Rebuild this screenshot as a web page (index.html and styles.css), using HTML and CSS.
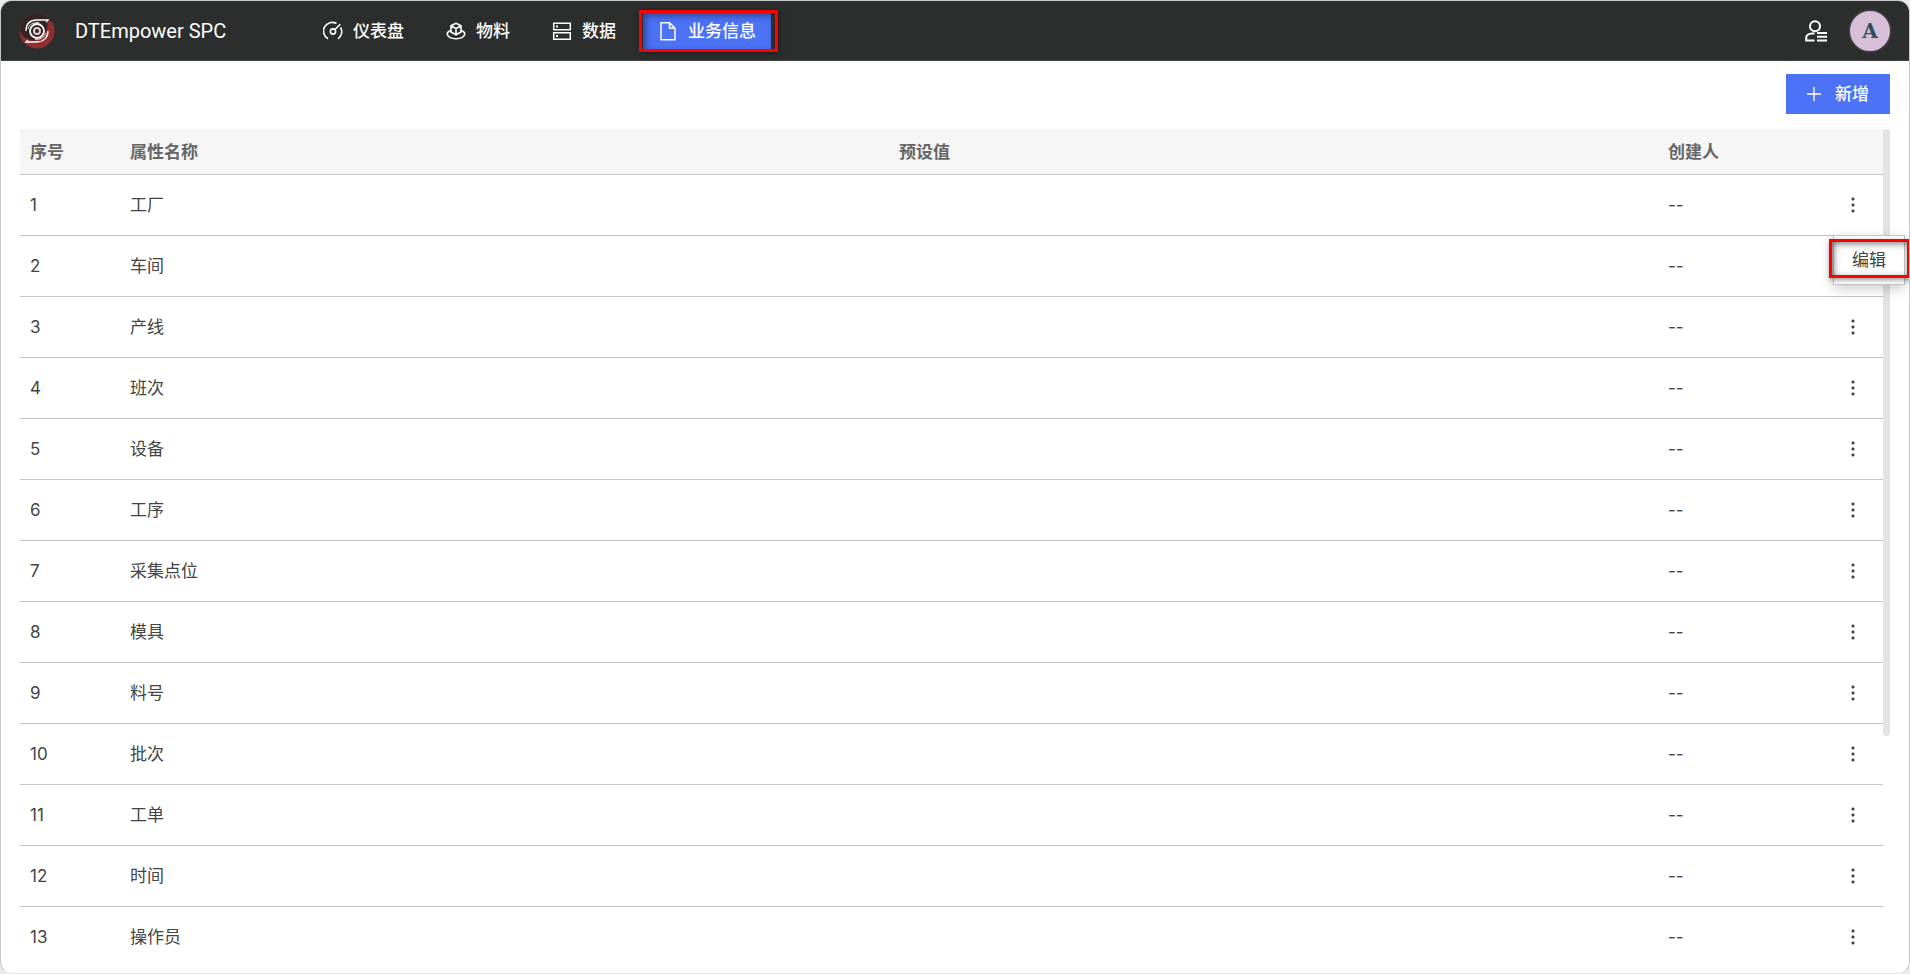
FILE: index.html
```html
<!DOCTYPE html>
<html lang="zh-CN">
<head>
    <meta charset="UTF-8">
    <meta name="viewport" content="width=device-width, initial-scale=1.0">
    <title>业务信息 - DTEmpower SPC</title>
    <link rel="stylesheet" href="styles.css">
</head>
<body>
    <div class="app">
        <header class="topbar">
            <svg class="logo" viewBox="0 0 36 36">
                <circle cx="18" cy="18" r="17.5" fill="#8f2f32"/>
                <path d="M0.500 17 A17.500 17.500 0 0 1 32 7.500 L28 9 C30 15 26 24 18 27 C10 29 3 24 0.500 17Z" fill="#332526"/>
                <g fill="none" stroke="#fff">
                    <circle cx="18" cy="18" r="7" stroke-width="1.8"/>
                    <circle cx="18" cy="18" r="3" stroke-width="2" stroke="#e6c8c8"/>
                    <path d="M7 18 C7 10 12 7 18 7 L29 7 L27 9" stroke-width="1.3"/>
                    <path d="M9 16 C10 11 14 9.500 20 9.500" stroke-width="0.8"/>
                    <path d="M29 18 C29 25 24 29 18 29 L7 29 L9 27" stroke-width="1.3"/>
                    <path d="M27 20 C26 24 22 26.500 16 26.500" stroke-width="0.8"/>
                </g>
            </svg>
            <h1 class="brand">DTEmpower SPC</h1>
            <nav class="nav">
                <a class="nav-item" href="#">
                    <svg class="nav-icon" viewBox="0 0 20 20" fill="none" stroke="currentColor" stroke-width="1.6">
                        <path d="M5 17.800 A8.600 8.600 0 0 1 13.500 2.500 M17.600 6.500 A8.600 8.600 0 0 1 15 17.800"/>
                        <circle cx="10" cy="10.500" r="2.600"/>
                        <path d="M12 8.500 L17.300 3.200"/>
                    </svg>
                    <span>仪表盘</span>
                </a>
                <a class="nav-item" href="#">
                    <svg class="nav-icon" viewBox="0 0 20 20" fill="none" stroke="currentColor" stroke-width="1.6" stroke-linejoin="round">
                        <path d="M10 2.200 L15 4.800 V11 L10 13.800 L5 11 V4.800 Z M5 4.800 L10 7.600 L15 4.800 M10 7.600 V13.800"/>
                        <path d="M5 9.500 C2.500 10.300 1.200 11.400 1.200 12.800 C1.200 15.800 5 17.800 10 17.800 C15 17.800 18.800 15.800 18.800 12.800 C18.800 11.400 17.500 10.300 15 9.500"/>
                    </svg>
                    <span>物料</span>
                </a>
                <a class="nav-item" href="#">
                    <svg class="nav-icon" viewBox="0 0 20 20" fill="none" stroke="currentColor" stroke-width="1.5">
                        <path d="M1.700 2.200 H18.300 V8.700 H1.700 Z M1.700 11.700 H18.300 V18.200 H1.700 Z"/>
                        <path d="M4 5.500 H6 M4 15 H6" stroke-width="2"/>
                    </svg>
                    <span>数据</span>
                </a>
                <a class="nav-item active" href="#">
                    <svg class="nav-icon" viewBox="0 0 20 20" fill="none" stroke="currentColor" stroke-width="1.5" stroke-linejoin="round">
                        <path d="M3 1.700 H11.500 L17 7.200 V18.700 H3 Z M11.500 1.700 V7.200 H17"/>
                    </svg>
                    <span>业务信息</span>
                </a>
            </nav>
            <button class="user-btn" type="button" aria-label="用户">
                <svg viewBox="0 0 24 24" fill="none" stroke="currentColor" stroke-width="2">
                    <circle cx="11" cy="7.200" r="5"/>
                    <path d="M10.500 14.500 H8 C4.500 14.500 2.200 16.500 2.200 19 V21.500 H10.500"/>
                    <path d="M13 14 H23 M13 17.800 H23 M13 21.500 H23"/>
                </svg>
            </button>
            <div class="avatar">A</div>
        </header>

        <main class="content">
            <div class="toolbar">
                <button class="add-btn" type="button">
                    <svg viewBox="0 0 14 14" stroke="currentColor" stroke-width="1.4"><path d="M7 0 V14 M0 7 H14"/></svg>
                    <span>新增</span>
                </button>
            </div>

            <div class="table-wrap">
                <table class="table">
                    <thead>
                        <tr>
                            <th class="col-no">序号</th>
                            <th>属性名称</th>
                            <th>预设值</th>
                            <th class="col-user">创建人</th>
                            <th class="col-action"></th>
                        </tr>
                    </thead>
                    <tbody>
                        <tr>
                            <td>1</td><td>工厂</td><td></td><td>--</td>
                            <td class="action">
                                <button class="more" type="button" aria-label="更多"></button>
                                <div class="menu">
                                    <button class="menu-item" type="button">编辑</button>
                                </div>
                            </td>
                        </tr>
                        <tr><td>2</td><td>车间</td><td></td><td>--</td><td class="action"><button class="more" type="button" aria-label="更多"></button></td></tr>
                        <tr><td>3</td><td>产线</td><td></td><td>--</td><td class="action"><button class="more" type="button" aria-label="更多"></button></td></tr>
                        <tr><td>4</td><td>班次</td><td></td><td>--</td><td class="action"><button class="more" type="button" aria-label="更多"></button></td></tr>
                        <tr><td>5</td><td>设备</td><td></td><td>--</td><td class="action"><button class="more" type="button" aria-label="更多"></button></td></tr>
                        <tr><td>6</td><td>工序</td><td></td><td>--</td><td class="action"><button class="more" type="button" aria-label="更多"></button></td></tr>
                        <tr><td>7</td><td>采集点位</td><td></td><td>--</td><td class="action"><button class="more" type="button" aria-label="更多"></button></td></tr>
                        <tr><td>8</td><td>模具</td><td></td><td>--</td><td class="action"><button class="more" type="button" aria-label="更多"></button></td></tr>
                        <tr><td>9</td><td>料号</td><td></td><td>--</td><td class="action"><button class="more" type="button" aria-label="更多"></button></td></tr>
                        <tr><td>10</td><td>批次</td><td></td><td>--</td><td class="action"><button class="more" type="button" aria-label="更多"></button></td></tr>
                        <tr><td>11</td><td>工单</td><td></td><td>--</td><td class="action"><button class="more" type="button" aria-label="更多"></button></td></tr>
                        <tr><td>12</td><td>时间</td><td></td><td>--</td><td class="action"><button class="more" type="button" aria-label="更多"></button></td></tr>
                        <tr><td>13</td><td>操作员</td><td></td><td>--</td><td class="action"><button class="more" type="button" aria-label="更多"></button></td></tr>
                    </tbody>
                </table>
                <div class="scrollbar"><div class="scroll-thumb"></div></div>
            </div>
        </main>
    </div>
</body>
</html>
```

FILE: styles.css
```css
* {
    box-sizing: border-box;
}

body {
    margin: 0;
    background-color: #ececec;
    font-family: Inter, "Noto Sans CJK SC", sans-serif;
    font-size: 17px;
    line-height: 24px;
    color: #444;
    overflow: hidden;
}

button {
    padding: 0;
    border: none;
    background: none;
    font: inherit;
    color: inherit;
    cursor: pointer;
}

.app {
    height: 100vh;
    border: 1px solid #c6c8c7;
    border-bottom-color: #e4e4e4;
    border-radius: 12px;
    background-color: #fff;
    overflow: hidden;
}

/* 顶部导航 */
.topbar {
    display: flex;
    align-items: center;
    height: 60px;
    padding: 0 17px 0 18px;
    background-color: #2c2e2d;
    border-bottom: 1px solid #404241;
    color: #fff;
}

.logo {
    width: 36px;
    height: 36px;
    flex: none;
}

.brand {
    width: 233px;
    margin: 0 0 0 20px;
    font-family: Roboto, sans-serif;
    font-size: 20px;
    font-weight: 400;
    white-space: nowrap;
}

.nav {
    display: flex;
    gap: 12px;
    flex: 1;
}

.nav-item {
    position: relative;
    display: flex;
    align-items: center;
    gap: 10px;
    height: 36px;
    padding: 0 15px;
    color: #fff;
    font-weight: 500;
    text-decoration: none;
}

.nav-icon {
    width: 20px;
    height: 20px;
}

.nav-item.active {
    background-color: #4c72f5;
    box-shadow: inset 3px 3px 6px rgba(0, 0, 0, 0.4);
}

/* 红色标注框 */
.nav-item.active::after {
    content: "";
    position: absolute;
    inset: -3px -7px -3px -4px;
    border: 3px solid #f00;
    box-shadow: 1px 1px 5px rgba(0, 0, 0, 0.4);
}

.user-btn {
    width: 24px;
    height: 24px;
    margin-right: 20px;
}

.user-btn svg {
    display: block;
}

.avatar {
    width: 44px;
    height: 44px;
    border: 2px solid #3a3a3c;
    border-radius: 50%;
    background-color: #d8bfd8;
    font-family: "DejaVu Serif", serif;
    font-size: 20px;
    font-weight: 700;
    line-height: 40px;
    color: #2f4f5f;
    text-align: center;
}

/* 内容区 */
.content {
    padding: 13px 19px 0;
}

.toolbar {
    display: flex;
    justify-content: flex-end;
    margin-bottom: 15px;
}

.add-btn {
    display: flex;
    align-items: center;
    justify-content: center;
    gap: 14px;
    width: 104px;
    height: 40px;
    background-color: #4c72f5;
    color: #fff;
    font-weight: 500;
}

.add-btn svg {
    width: 14px;
    height: 14px;
}

.table-wrap {
    display: flex;
    align-items: flex-start;
}

.table {
    width: 100%;
    table-layout: fixed;
    border-collapse: separate;
    border-spacing: 0;
}

.table th,
.table td {
    padding: 0 10px;
    border-bottom: 1px solid #c6c6c6;
    text-align: left;
}

.table th {
    height: 46px;
    background-color: #f5f5f5;
    color: #666;
    font-weight: 700;
}

.table td {
    height: 61px;
}

.table tr:last-child td {
    border-bottom-color: transparent;
}

.col-no {
    width: 100px;
}

.col-user {
    width: 165px;
}

.col-action {
    width: 60px;
}

/* 表头保留底线 */
.table thead th {
    border-bottom-color: #c6c6c6;
}

.table .action {
    position: relative;
    text-align: center;
}

.more {
    display: block;
    width: 20px;
    height: 18px;
    margin: 0 auto;
    background: radial-gradient(circle, #444 1px, transparent 2px) center / 6px 6px no-repeat,
                radial-gradient(circle, #444 1px, transparent 2px) center top / 6px 6px no-repeat,
                radial-gradient(circle, #444 1px, transparent 2px) center bottom / 6px 6px no-repeat;
}

/* 操作菜单 */
.menu {
    position: absolute;
    top: 60px;
    left: 10px;
    z-index: 2;
    width: 72px;
    height: 50px;
    border: 1px solid #c6c6c6;
    background-color: #fff;
    box-shadow: 0 4px 12px rgba(0, 0, 0, 0.2);
}

.menu-item {
    width: 100%;
    height: 48px;
}

.menu::after {
    content: "";
    position: absolute;
    inset: 3px -6px 6px -5px;
    border: 3px solid #f00;
    box-shadow: 1px 2px 5px rgba(0, 0, 0, 0.4), inset 2px 2px 6px rgba(0, 0, 0, 0.5);
    pointer-events: none;
}

.scrollbar {
    flex: none;
    width: 7px;
}

.scroll-thumb {
    height: 607px;
    border-radius: 4px;
    background-color: #e3e3e3;
}
```
